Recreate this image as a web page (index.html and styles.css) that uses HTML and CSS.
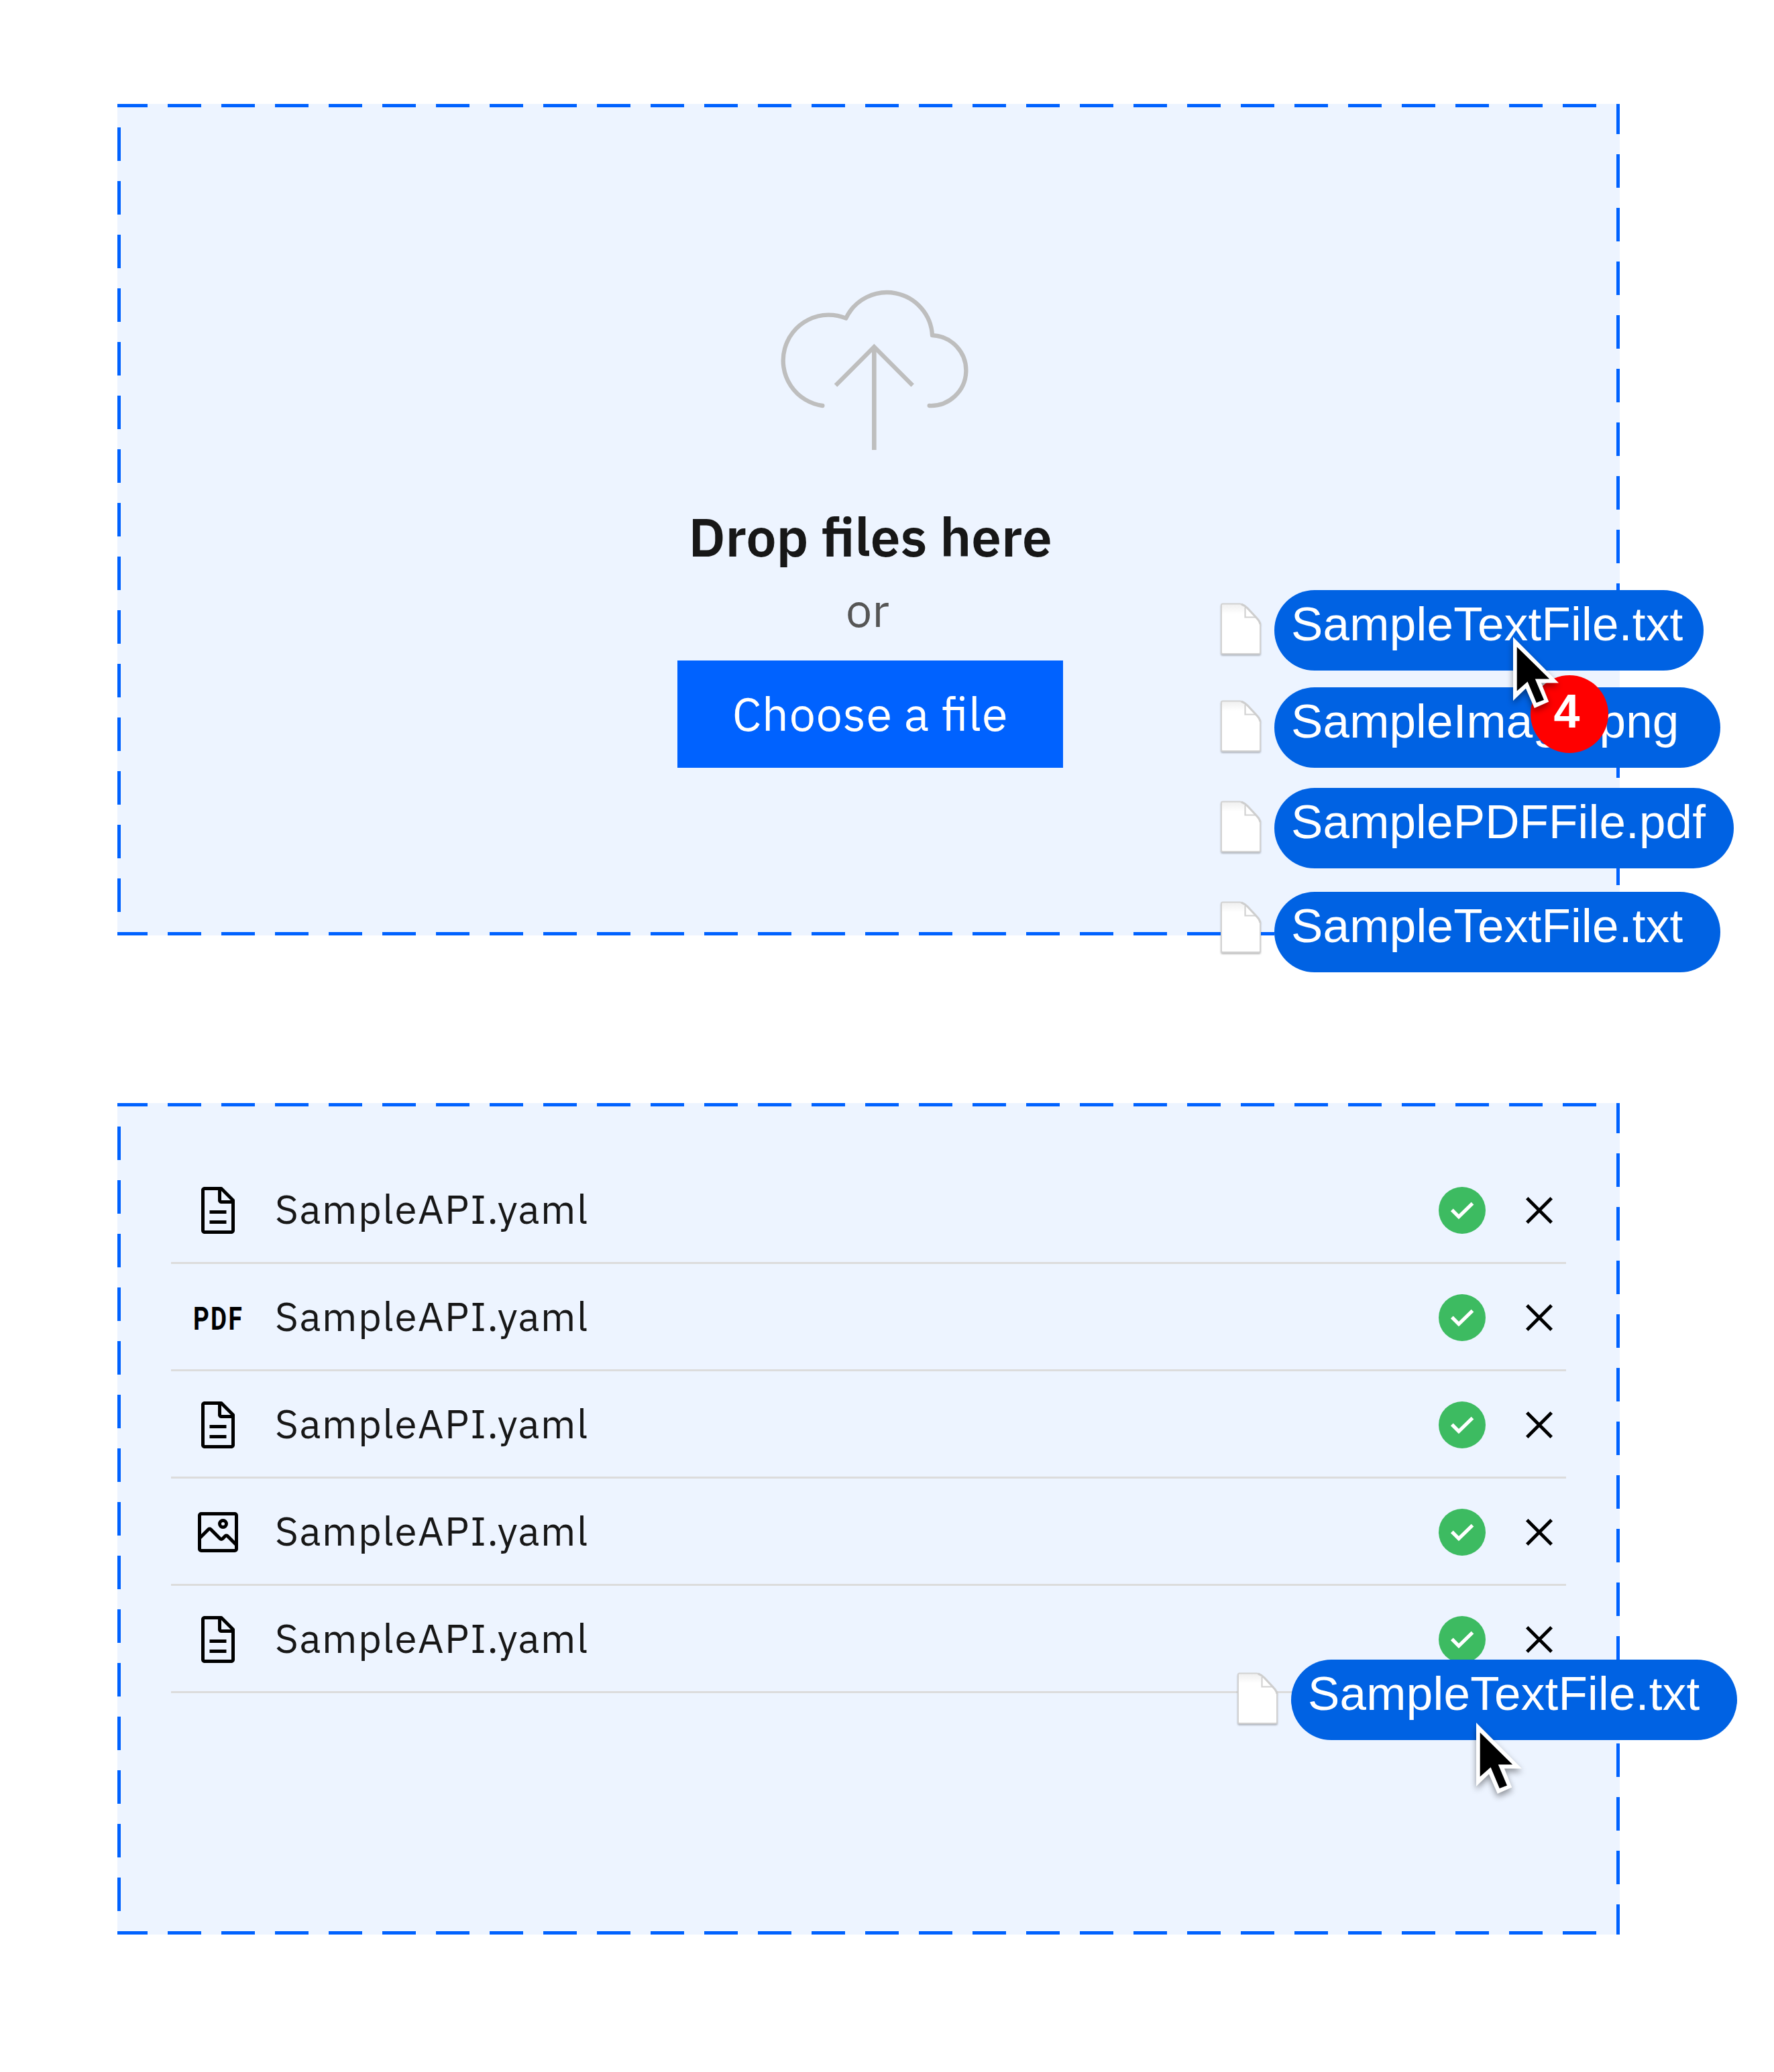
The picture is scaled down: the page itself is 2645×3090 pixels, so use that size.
FILE: index.html
```html
<!DOCTYPE html>
<html lang="en">
<head>
<meta charset="utf-8">
<title>File uploader</title>
<link rel="stylesheet" href="styles.css">
</head>
<body>
<svg class="defs" aria-hidden="true">
  <defs>
    <linearGradient id="paper" x1="0" y1="0" x2="0" y2="1">
      <stop offset="0" stop-color="#efefef"/><stop offset=".2" stop-color="#fff"/>
    </linearGradient>
    <symbol id="doc" viewBox="0 0 32 32">
      <path d="M25.7 9.3l-7-7C18.5 2.1 18.3 2 18 2H8C6.9 2 6 2.9 6 4v24c0 1.1.9 2 2 2h16c1.1 0 2-.9 2-2V10c0-.3-.1-.5-.3-.7zM18 4.4l5.6 5.6H18V4.4zM24 28H8V4h8v6c0 1.1.9 2 2 2h6v16z"/>
      <path d="M11 22h10v2H11zM11 16h10v2H11z"/>
    </symbol>
    <symbol id="picture" viewBox="0 0 32 32">
      <path d="M19 14a3 3 0 1 0-3-3 3 3 0 0 0 3 3zm0-4a1 1 0 1 1-1 1 1 1 0 0 1 1-1z"/>
      <path d="M26 4H6a2 2 0 0 0-2 2v20a2 2 0 0 0 2 2h20a2 2 0 0 0 2-2V6a2 2 0 0 0-2-2zm0 22H6v-6l5-5 5.59 5.59a2 2 0 0 0 2.82 0L21 19l5 5zm0-4.83l-3.59-3.59a2 2 0 0 0-2.82 0L18 19.17l-5.59-5.59a2 2 0 0 0-2.82 0L6 17.17V6h20z"/>
    </symbol>
    <symbol id="check" viewBox="0 0 70 70">
      <circle cx="35" cy="35" r="35" fill="#3dbb61"/>
      <path d="M19.8 34.4L30 44.6 50.5 24.6" fill="none" stroke="#fff" stroke-width="5.3"/>
    </symbol>
    <symbol id="close" viewBox="0 0 32 32">
      <path d="M24 9.4L22.6 8 16 14.6 9.4 8 8 9.4l6.6 6.6L8 22.6 9.4 24l6.6-6.6 6.6 6.6 1.4-1.4-6.6-6.6z"/>
    </symbol>
    <symbol id="file" viewBox="0 0 64 84">
      <path d="M5 2.5H31Q37 4 42 9L55 23Q61 29 61 34V75Q61 77 59 77H5Q3 77 3 75V4.500Q3 2.500 5 2.500Z" fill="url(#paper)" stroke="#d2d2d2" stroke-width="2"/>
      <path d="M38.500 8V22.500H54" fill="#fff" stroke="#d2d2d2" stroke-width="2.200"/>
      <path d="M33 3Q38 5 42 9L55 23Q60 28 61 33" fill="none" stroke="#cecece" stroke-width="3"/>
    </symbol>
    <symbol id="cursor" viewBox="0 0 70 108">
      <path d="M0 0L68 68.4H42L53.2 96.4 31.8 106 19 76.7 0 95Z" fill="#fff"/>
      <path d="M5.7 14.7L54.2 62.4H32.8L46 93.7 34.8 98 21.6 66.4 5.7 80.4Z"/>
    </symbol>
  </defs>
</svg>
<main class="page">
  <section class="panel">
    <div class="prompt">
      <svg class="cloud" viewBox="102 60 840 726" fill="none" stroke="#bebebe">
        <path d="M289 585A204 204 0 1 1 394 194A203 203 0 0 1 780 270A157 157 0 0 1 767 585" stroke-width="19" stroke-linecap="round" stroke-linejoin="round"/>
        <path d="M348 494L520 322 692 494" stroke-width="19"/>
        <path d="M520 326V783" stroke-width="20"/>
      </svg>
      <h2 class="title">Drop files here</h2>
      <p class="or">or</p>
      <button class="choose">Choose a file</button>
    </div>
    <div class="drag drag-1"><svg class="thumb"><use href="#file"/></svg><span class="pill pill-txt">SampleTextFile.txt</span></div>
    <div class="drag drag-2"><svg class="thumb"><use href="#file"/></svg><span class="pill">SampleImage.png</span></div>
    <div class="drag drag-3"><svg class="thumb"><use href="#file"/></svg><span class="pill">SamplePDFFile.pdf</span></div>
    <div class="drag drag-4"><svg class="thumb"><use href="#file"/></svg><span class="pill pill-txt">SampleTextFile.txt</span></div>
    <span class="badge">4</span>
    <svg class="cursor cursor-1"><use href="#cursor"/></svg>
  </section>
  <section class="panel">
    <ul class="list">
      <li class="row"><svg class="icon"><use href="#doc"/></svg><span class="name">SampleAPI.yaml</span><svg class="check"><use href="#check"/></svg><svg class="icon"><use href="#close"/></svg></li>
      <li class="row"><svg class="icon"><text class="pdf" x="3" y="57.5" textLength="75" lengthAdjust="spacingAndGlyphs">PDF</text></svg><span class="name">SampleAPI.yaml</span><svg class="check"><use href="#check"/></svg><svg class="icon"><use href="#close"/></svg></li>
      <li class="row"><svg class="icon"><use href="#doc"/></svg><span class="name">SampleAPI.yaml</span><svg class="check"><use href="#check"/></svg><svg class="icon"><use href="#close"/></svg></li>
      <li class="row"><svg class="icon"><use href="#picture"/></svg><span class="name">SampleAPI.yaml</span><svg class="check"><use href="#check"/></svg><svg class="icon"><use href="#close"/></svg></li>
      <li class="row"><svg class="icon"><use href="#doc"/></svg><span class="name">SampleAPI.yaml</span><svg class="check"><use href="#check"/></svg><svg class="icon"><use href="#close"/></svg></li>
    </ul>
    <div class="drag drag-5"><svg class="thumb"><use href="#file"/></svg><span class="pill pill-txt">SampleTextFile.txt</span></div>
    <svg class="cursor cursor-2"><use href="#cursor"/></svg>
  </section>
</main>
</body>
</html>
```
FILE: styles.css
```css
* { box-sizing: border-box; margin: 0; padding: 0; }
body { background: #fff; font-family: "IBM Plex Sans", Roboto, sans-serif; color: #171717; }
svg { display: block; flex: none; }
.defs { position: absolute; width: 0; height: 0; }
.page { display: flex; flex-direction: column; gap: 250px; width: 2645px; height: 3090px; padding: 155px 230px 0 175px; overflow: hidden; }

/* 50px dashes with 30px gaps on each edge */
.panel {
  --dash-x: linear-gradient(90deg, #0062ff 50px, transparent 50px);
  --dash-y: linear-gradient(180deg, #0062ff 50px, transparent 50px);
  position: relative;
  flex: none;
  width: 2240px;
  height: 1240px;
  background:
    var(--dash-x) -5px 0 / 80px 5px repeat-x,
    var(--dash-x) -5px 100% / 80px 5px repeat-x,
    var(--dash-y) 0 35px / 5px 80px repeat-y,
    var(--dash-y) 100% -5px / 5px 80px repeat-y,
    #edf4ff;
}

.prompt { display: flex; flex-direction: column; align-items: center; padding-top: 275px; padding-left: 5px; }
.cloud { width: 280px; height: 242px; margin-left: 13px; }
.title { margin-top: 78px; font-size: 80px; line-height: 100px; font-weight: 600; white-space: nowrap; }
.or { margin: 9px 8px 0 0; font-size: 70px; line-height: 100px; color: #565656; }
.choose { width: 575px; height: 160px; margin-top: 26px; border: 0; background: #0062ff; color: #fff; font: 400 70px/158px "IBM Plex Sans", Roboto, sans-serif; letter-spacing: .8px; font-feature-settings: "liga" 1; padding-bottom: 2px; white-space: nowrap; }

.list { list-style: none; padding: 80px; }
.row { display: flex; align-items: center; height: 160px; padding-left: 30px; box-shadow: inset 0 -3px #dcdcdc; }
.icon { width: 80px; height: 80px; overflow: visible; }
.name { flex: 1; margin-left: 45px; padding-bottom: 4px; font-size: 60px; letter-spacing: 1.6px; line-height: 80px; }
.check { width: 70px; height: 70px; margin-right: 40px; }
.pdf { font: 700 49px Roboto, sans-serif; fill: #000; letter-spacing: 3px; }

.drag { position: absolute; display: flex; }
.thumb { width: 64px; height: 84px; margin: 18px 18px 0 0; filter: drop-shadow(0 2px 1px rgba(0, 0, 0, .25)); }
.pill { width: 665px; height: 120px; padding-left: 25px; border-radius: 60px; background: #0062e3; color: #fff; font: 71px/102px "Liberation Sans", Arial, sans-serif; letter-spacing: .15px; white-space: nowrap; }
.pill-txt { letter-spacing: .25px; }
.drag-1 { left: 1643px; top: 725px; }
.drag-1 .pill { width: 640px; }
.drag-2 { left: 1643px; top: 870px; }
.drag-3 { left: 1643px; top: 1020px; }
.drag-3 .pill { width: 685px; }
.drag-4 { left: 1643px; top: 1175px; }
.drag-4 .thumb { margin-top: 13px; }
.drag-5 { left: 1668px; top: 830px; }

.badge { position: absolute; left: 2107px; top: 852px; width: 116px; height: 116px; padding-right: 8px; border-radius: 50%; background: #f00; color: #fff; font: 700 70px/108px "Liberation Sans", Arial, sans-serif; text-align: center; }
.cursor { position: absolute; width: 70px; height: 108px; overflow: visible; filter: drop-shadow(0 5px 5px rgba(0, 0, 0, .4)); }
.cursor-1 { left: 2081px; top: 795px; }
.cursor-2 { left: 2026px; top: 924px; }
```
